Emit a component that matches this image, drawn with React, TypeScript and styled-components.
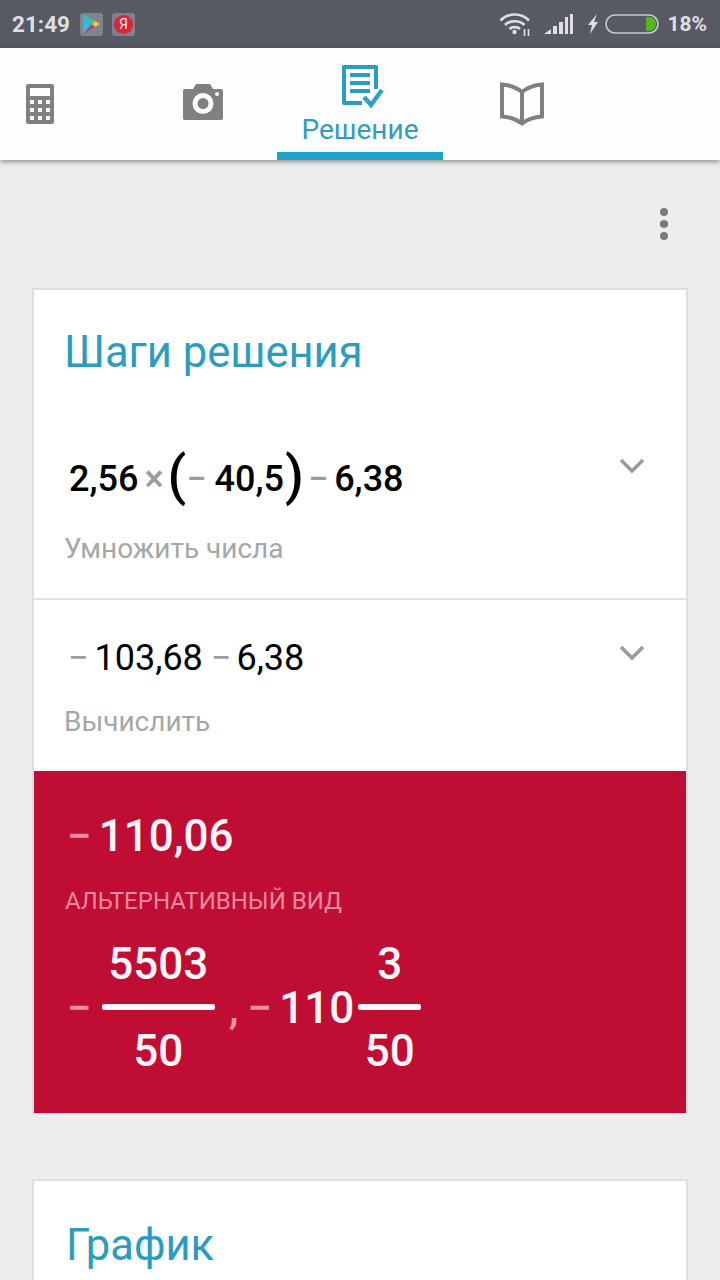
import styled, { createGlobalStyle } from 'styled-components';

const GlobalStyle = createGlobalStyle`
	html, body {
		margin: 0;
		padding: 0;
		height: 1280px;
		overflow: hidden;
		background: #eeeeee;
		font-family: Roboto, "Liberation Sans", sans-serif;
	}
`;

const Page = styled.div`
	width: 720px;
	height: 1280px;
	overflow: hidden;
	background: #eeeeee;
`;

const StatusBar = styled.div`
	height: 48px;
	background: #575a62;
	display: flex;
	align-items: center;
	padding: 0 13px 0 12px;
	box-sizing: border-box;
	color: #dedfe2;
	font-size: 21px;
	font-weight: 700;
`;

const StatusLeft = styled.div`
	display: flex;
	align-items: center;
	gap: 9px;
	flex: 1;
`;

const StatusRight = styled.div`
	display: flex;
	align-items: center;
`;

const Clock = styled.span`
	font-size: 22.5px;
	margin-right: 1px;
`;

const Percent = styled.span`
	margin-left: 8px;
`;

const StatusGlyph = styled.svg<{ $gap?: number }>`
	margin-left: ${p => p.$gap ?? 0}px;
`;

const NoticeIcon = styled.div<{ $tint: string }>`
	width: 23px;
	height: 23px;
	border-radius: 3px;
	background: ${p => p.$tint};
	display: flex;
	align-items: center;
	justify-content: center;
`;

const YandexDot = styled.div`
	width: 19px;
	height: 19px;
	border-radius: 50%;
	background: #d9263c;
	color: #f5e6e8;
	font-size: 14px;
	font-weight: 400;
	display: flex;
	align-items: center;
	justify-content: center;
`;

const TabBar = styled.div`
	height: 112px;
	background: #fdfdfd;
	box-shadow: 0 2px 5px rgba(0, 0, 0, 0.4);
	display: grid;
	grid-template-columns: 80px 197px 166px 158px;
	position: relative;
`;

const Tab = styled.div<{ $active?: boolean; $inset?: number }>`
	display: flex;
	flex-direction: column;
	align-items: center;
	justify-content: ${p => (p.$active ? 'flex-start' : 'center')};
	box-sizing: border-box;
	height: 112px;
	padding-top: ${p => (p.$active ? '17px' : '0')};
	padding-left: ${p => p.$inset ?? 0}px;
	border-bottom: ${p => (p.$active ? '8px solid #1fa2c7' : 'none')};
`;

const CameraIcon = styled.svg`
	margin-bottom: 4px;
`;

const SolutionIcon = styled.svg`
	margin-left: 6px;
`;

const TabLabel = styled.span`
	color: #2f9dbd;
	font-size: 28px;
	line-height: 30px;
	margin-top: 6px;
`;

const Content = styled.div`
	padding: 0 32px;
`;

const MenuRow = styled.div`
	height: 128px;
	display: flex;
	justify-content: flex-end;
	padding: 48px 20px 0 0;
	box-sizing: border-box;
`;

const MenuDots = styled.div`
	display: flex;
	flex-direction: column;
	gap: 4px;
`;

const Dot = styled.span`
	width: 8px;
	height: 8px;
	border-radius: 50%;
	background: #7a7a7a;
`;

const Card = styled.section`
	background: #ffffff;
	border: 2px solid #dfdfdf;
	border-bottom: 1px solid #f4cdd5;
	box-sizing: border-box;
	width: 656px;
`;

const CardTitle = styled.h2<{ $top: number; $left: number }>`
	margin: 0;
	color: #2a9dbe;
	font-size: 43.5px;
	font-weight: 400;
	line-height: 50px;
	padding: ${p => p.$top}px 0 0 ${p => p.$left}px;
`;

const Step = styled.div<{ $height: number; $divider?: boolean }>`
	height: ${p => p.$height}px;
	position: relative;
	border-bottom: ${p => (p.$divider ? '2px solid #e3e3e3' : 'none')};
	box-sizing: border-box;
`;

const Expression = styled.div<{ $top: number; $left: number; $strong?: boolean }>`
	display: flex;
	align-items: center;
	height: 50px;
	padding: ${p => p.$top}px 0 0 ${p => p.$left}px;
	color: #000000;
	font-size: 36px;
	font-weight: ${p => (p.$strong ? 500 : 400)};
	white-space: nowrap;
`;

const Operator = styled.span<{ $before: number; $after: number }>`
	color: #9c9c9c;
	margin: 0 ${p => p.$after}px 0 ${p => p.$before}px;
`;

const Paren = styled.span<{ $before?: number }>`
	font-size: 54px;
	font-weight: 500;
	line-height: 50px;
	position: relative;
	top: -3px;
	margin-left: ${p => p.$before ?? 0}px;
`;

const Hint = styled.div<{ $top: number }>`
	color: #a6a6a6;
	font-size: 28px;
	line-height: 32px;
	padding: ${p => p.$top}px 0 0 30px;
`;

const Chevron = styled.svg<{ $top: number }>`
	position: absolute;
	top: ${p => p.$top}px;
	right: 41px;
`;

const ResultPanel = styled.div`
	background: #bf0d34;
	height: 342px;
	box-sizing: border-box;
	padding: 37px 0 0 33px;
	color: #fff5f7;
`;

const ResultValue = styled.div`
	display: flex;
	align-items: center;
	height: 56px;
	font-size: 44px;
	font-weight: 500;
`;

const Minus = styled.span<{ $after: number }>`
	color: #f2909f;
	margin-right: ${p => p.$after}px;
`;

const AltLabel = styled.div`
	color: #ee8a9e;
	font-size: 24px;
	line-height: 30px;
	margin: 22px 0 0 -2px;
`;

const Formula = styled.div`
	display: flex;
	align-items: center;
	height: 139px;
	margin-top: 22px;
	font-size: 44px;
	font-weight: 500;
`;

const Fraction = styled.div<{ $width: number }>`
	width: ${p => p.$width}px;
	display: flex;
	flex-direction: column;
	align-items: center;
`;

const FractionPart = styled.span`
	line-height: 52px;
`;

const FractionBar = styled.span`
	align-self: stretch;
	height: 6px;
	border-radius: 2px;
	background: #fff5f7;
	margin: 14px 0 15px;
`;

const Comma = styled.span`
	color: #f2909f;
	margin: 0 9px 0 14px;
`;

const Whole = styled.span`
	margin-right: 4px;
`;

const NextCard = styled(Card)`
	margin-top: 65px;
	height: 200px;
`;

const App = () => {
	return (
		<Page>
			<GlobalStyle />
			<StatusBar>
				<StatusLeft>
					<Clock>21:49</Clock>
					<NoticeIcon $tint="#7c8590">
						<svg width="19" height="20" viewBox="0 0 19 20">
							<path d="M1 0l9 10-9 10z" fill="#35b6e6" />
							<path d="M1 0l12 7-3 3z" fill="#4fbf7a" />
							<path d="M1 20l12-7-3-3z" fill="#a5505f" />
							<path d="M13 7l5 3-5 3-3-3z" fill="#f5c22c" />
						</svg>
					</NoticeIcon>
					<NoticeIcon $tint="#80808c">
						<YandexDot>Я</YandexDot>
					</NoticeIcon>
				</StatusLeft>
				<StatusRight>
					<StatusGlyph width="32" height="24" viewBox="0 0 32 24" fill="none" stroke="#dedfe2" strokeWidth="2.6">
						<path d="M1.500 8.500c7.500-8 21-8 28.500 0" />
						<path d="M6 13c5-5 14.500-5 19.500 0" />
						<path d="M10.500 17c2.500-2.500 8-2.500 10.500 0" />
						<circle cx="15.500" cy="20" r="2.200" fill="#dedfe2" stroke="none" />
						<path d="M25.500 17v7M29.500 17v7" strokeWidth="1.600" />
					</StatusGlyph>
					<StatusGlyph $gap={13} width="30" height="20" viewBox="0 0 30 20" fill="#dedfe2">
						<path d="M0 20l7-5v5zM9 20v-8h4v8zM15 20V8h4v12zM21 20V3h3v17zM26 20V0h3v20z" />
					</StatusGlyph>
					<StatusGlyph $gap={12} width="14" height="22" viewBox="0 0 14 22" fill="#dedfe2">
						<path d="M11 1L2 12h4l-2 9 8-12H8z" />
					</StatusGlyph>
					<StatusGlyph $gap={5} width="54" height="20" viewBox="0 0 54 20">
						<rect x="1" y="1" width="52" height="18" rx="9" fill="none" stroke="#c9cbce" strokeWidth="1.600" />
						<path d="M41 3h3c4 0 7 3 7 7s-3 7-7 7h-3z" fill="#55b81f" />
					</StatusGlyph>
					<Percent>18%</Percent>
				</StatusRight>
			</StatusBar>

			<TabBar>
				<Tab>
					<svg width="28" height="40" viewBox="0 0 28 40">
						<path fillRule="evenodd" fill="#808080" d="M2 0h24a2 2 0 0 1 2 2v36a2 2 0 0 1-2 2H2a2 2 0 0 1-2-2V2a2 2 0 0 1 2-2zM4 4v8h20V4zM4 16v4h4v-4zM12 16v4h4v-4zM20 16v4h4v-4zM4 24v4h4v-4zM12 24v4h4v-4zM20 24v4h4v-4zM4 32v4h4v-4zM12 32v4h4v-4zM20 32v4h4v-4z" />
					</svg>
				</Tab>
				<Tab $inset={49}>
					<CameraIcon width="40" height="36" viewBox="0 0 40 36">
						<path fillRule="evenodd" fill="#808080" d="M2 5h8l3-5h14l3 5h8a2 2 0 0 1 2 2v27a2 2 0 0 1-2 2H2a2 2 0 0 1-2-2V7a2 2 0 0 1 2-2zM20 9a10.500 10.500 0 1 0 0 21 10.500 10.500 0 0 0 0-21zM20 14a5.500 5.500 0 1 1 0 11 5.500 5.500 0 0 1 0-11zM34 8a2 2 0 1 0 0 4 2 2 0 0 0 0-4z" />
					</CameraIcon>
				</Tab>
				<Tab $active>
					<SolutionIcon width="42" height="44" viewBox="0 0 42 44" fill="none" stroke="#2a9dbd" strokeWidth="4">
						<path d="M20 38H2V2h32v22" strokeLinejoin="round" />
						<path d="M8 10h20M8 18h20M8 26h20" />
						<path d="M22 32l7 8 11-15" stroke="#2fa3c6" strokeWidth="4.500" />
					</SolutionIcon>
					<TabLabel>Решение</TabLabel>
				</Tab>
				<Tab>
					<svg width="44" height="44" viewBox="0 0 44 44" fill="none" stroke="#808080" strokeWidth="4">
						<path d="M22 10C16 5 9 3 2 2.500v32c7 .5 14 2.500 20 7 6-4.500 13-6.500 20-7v-32C35 3 28 5 22 10zM22 10v31" />
					</svg>
				</Tab>
			</TabBar>

			<Content>
				<MenuRow>
					<MenuDots>
						<Dot />
						<Dot />
						<Dot />
					</MenuDots>
				</MenuRow>

				<Card>
					<CardTitle $top={38} $left={30}>Шаги решения</CardTitle>
					<Step $height={222} $divider>
						<Chevron $top={80} width="26" height="16" viewBox="0 0 26 16" fill="none" stroke="#9a9a9a" strokeWidth="3.500">
							<path d="M2 2l11 11L24 2" />
						</Chevron>
						<Expression $top={76} $left={35} $strong>
							2,56
							<Operator $before={6} $after={4}>×</Operator>
							<Paren>(</Paren>
							<Operator $before={0} $after={8}>−</Operator>
							40,5
							<Paren $before={1}>)</Paren>
							<Operator $before={4} $after={6}>−</Operator>
							6,38
						</Expression>
						<Hint $top={29}>Умножить числа</Hint>
					</Step>
					<Step $height={171}>
						<Chevron $top={45} width="26" height="16" viewBox="0 0 26 16" fill="none" stroke="#9a9a9a" strokeWidth="3.500">
							<path d="M2 2l11 11L24 2" />
						</Chevron>
						<Expression $top={33} $left={34}>
							<Operator $before={0} $after={6}>−</Operator>
							103,68
							<Operator $before={8} $after={5}>−</Operator>
							6,38
						</Expression>
						<Hint $top={23}>Вычислить</Hint>
					</Step>
					<ResultPanel>
						<ResultValue>
							<Minus $after={7}>−</Minus>110,06
						</ResultValue>
						<AltLabel>АЛЬТЕРНАТИВНЫЙ ВИД</AltLabel>
						<Formula>
							<Minus $after={10}>−</Minus>
							<Fraction $width={113}>
								<FractionPart>5503</FractionPart>
								<FractionBar />
								<FractionPart>50</FractionPart>
							</Fraction>
							<Comma>,</Comma>
							<Minus $after={7}>−</Minus>
							<Whole>110</Whole>
							<Fraction $width={63}>
								<FractionPart>3</FractionPart>
								<FractionBar />
								<FractionPart>50</FractionPart>
							</Fraction>
						</Formula>
					</ResultPanel>
				</Card>

				<NextCard>
					<CardTitle $top={40} $left={32}>График</CardTitle>
				</NextCard>
			</Content>
		</Page>
	);
};

export default App;
